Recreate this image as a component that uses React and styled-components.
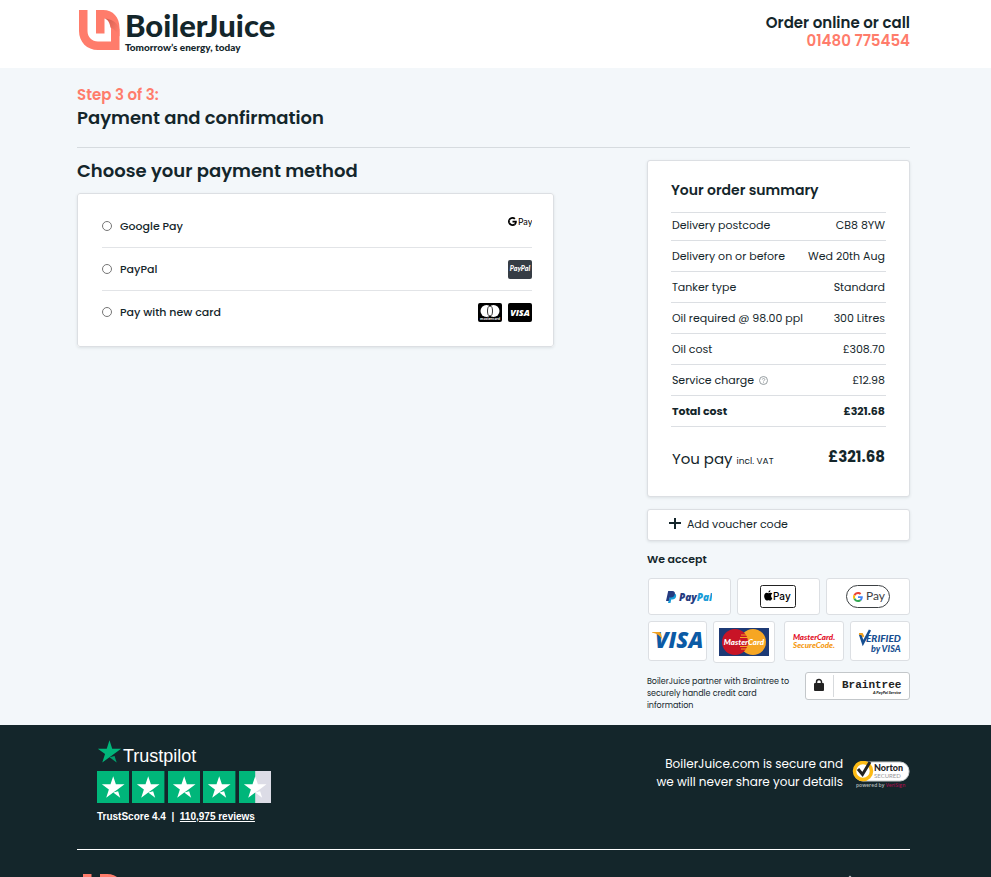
import React from "react";
import styled, { createGlobalStyle, css } from "styled-components";

const ink = "#14262b";
const coral = "#ff7c6b";
const line = "#dcdfe3";
const poppins = `Poppins, Inter, "Open Sans", sans-serif`;

const GlobalStyle = createGlobalStyle`
  *, *::before, *::after { box-sizing: border-box; }
  body { margin: 0; background: #f3f7fa; color: ${ink}; font-family: ${poppins}; font-size: 11px; }
  h1, h2, h3, p, fieldset { margin: 0; padding: 0; border: 0; }
  svg { display: block; flex: none; }
`;

const Page = styled.div`
  height: 100vh;
  overflow-y: auto;
  scrollbar-width: none;
  background: #f3f7fa;
`;

const Container = styled.div`
  padding: 0 81px 0 77px;
`;

const Header = styled.header`
  background: #fff;
  height: 68px;
`;

const HeaderRow = styled(Container)`
  display: flex;
  justify-content: space-between;
  align-items: flex-start;
`;

const LogoLink = styled.a`
  display: flex;
  gap: 5px;
  padding: 10px 0 0 2px;
  color: ${(p) => p.$color || ink};
  text-decoration: none;
  font-family: Lato, sans-serif;
`;

const LogoName = styled.span`
  display: block;
  font-size: 31px;
  line-height: 31px;
  font-weight: 900;
`;

const LogoTag = styled.span`
  display: block;
  font-size: 10px;
  line-height: 13px;
  font-weight: 900;
`;

const Call = styled.div`
  padding-top: 14px;
  text-align: right;
  font-size: 15px;
  line-height: 18px;
  font-weight: 600;
`;

const Phone = styled.a`
  display: block;
  color: ${coral};
  text-decoration: none;
`;

const TitleBar = styled.div`
  padding: 17px 0;
  border-bottom: 1px solid #d6dbdf;
`;

const Step = styled.p`
  color: ${coral};
  font-size: 15px;
  line-height: 20px;
  font-weight: 600;
`;

const Heading = styled.h1`
  margin-top: 1px;
  font-size: 18px;
  line-height: 24px;
  font-weight: 600;
`;

const Columns = styled.main`
  display: grid;
  grid-template-columns: 29fr 16fr;
  gap: 93px;
  padding: 12px 0 13px;
  align-items: start;
`;

const SectionTitle = styled.h2`
  font-size: 18px;
  line-height: 21px;
  font-weight: 600;
  margin-bottom: 12px;
`;

const Card = styled.section`
  background: #fff;
  border: 1px solid ${line};
  border-radius: 3px;
  box-shadow: 0 1px 3px rgba(20, 38, 43, 0.1);
`;

const Methods = styled(Card).attrs({ as: "fieldset" })`
  padding: 10px 21px 13px 24px;
`;

const MethodRow = styled.div`
  display: flex;
  align-items: center;
  gap: 6px;
  height: 43px;
  & + & { border-top: 1px solid #e2e4e7; }
`;

const MethodLabel = styled.label`
  display: flex;
  align-items: center;
  gap: 8px;
  margin-right: auto;
  font-size: 11px;
  line-height: 16px;
  font-weight: 500;
`;

const Radio = styled.input`
  appearance: none;
  width: 10px;
  height: 10px;
  margin: 0;
  border: 1px solid #767676;
  border-radius: 50%;
  background: #fff;
  &:checked { border: 3px solid #0b6bd3; }
`;

const Summary = styled(Card)`
  padding: 19px 23px 21px;
`;

const SummaryTitle = styled.h3`
  font-size: 14px;
  line-height: 20px;
  font-weight: 600;
  margin-bottom: 12px;
`;

const Lines = styled.table`
  width: 100%;
  border-collapse: collapse;
  border-bottom: 1px solid ${line};
`;

const Line = styled.tr`
  height: 31px;
  border-top: 1px solid ${line};
  font-size: 11px;
  line-height: 16px;
  font-weight: ${(p) => (p.$bold ? 700 : 400)};
  th, td { padding: 0 1px; font-weight: inherit; white-space: nowrap; }
  th { text-align: left; }
  td { text-align: right; }
  &:first-child { height: 28px; }
  &:first-child > * { padding-bottom: 3px; }
`;

const Help = styled.button`
  display: inline-flex;
  padding: 0;
  margin-left: 5px;
  border: 0;
  background: none;
  vertical-align: -1px;
`;

const PayRow = styled.div`
  display: flex;
  justify-content: space-between;
  align-items: flex-start;
  padding: 18px 1px 0;
`;

const YouPay = styled.span`
  font-size: 15px;
  line-height: 27px;
`;

const Vat = styled.small`
  font-size: 9px;
  font-weight: 400;
`;

const PayTotal = styled.strong`
  font-size: 15px;
  line-height: 23px;
`;

const Voucher = styled.button`
  display: flex;
  align-items: center;
  gap: 6px;
  width: 100%;
  height: 32px;
  margin: 12px 0 9px;
  padding: 0 21px 2px;
  border: 1px solid ${line};
  border-radius: 3px;
  background: #fff;
  box-shadow: 0 1px 3px rgba(20, 38, 43, 0.1);
  color: ${ink};
  font: 400 11px/16px ${poppins};
`;

const AcceptTitle = styled.h3`
  font-size: 11px;
  line-height: 18px;
  font-weight: 600;
  margin-bottom: 10px;
`;

const Badges = styled.div`
  display: grid;
  grid-template-columns: ${(p) => p.$cols};
  align-items: start;
  gap: 6px;
  margin-bottom: 6px;
  padding-left: 1px;
`;

const Badge = styled.div`
  display: flex;
  align-items: center;
  justify-content: center;
  height: ${(p) => p.$h}px;
  margin-left: ${(p) => (p.$spaced ? 3 : 0)}px;
  background: #fff;
  border: 1px solid ${line};
  border-radius: 3px;
`;

const Partner = styled.div`
  display: flex;
  justify-content: space-between;
  align-items: flex-start;
  padding-top: 3px;
`;

const PartnerText = styled.p`
  flex: 1;
  padding-top: 4px;
  font-size: 8px;
  line-height: 12px;
`;

const Braintree = styled.a`
  display: flex;
  width: 105px;
  height: 28px;
  border: 1px solid #c3c7ca;
  border-radius: 3px;
  background: #fff;
`;

const Footer = styled.footer`
  background: ${ink};
  color: #fff;
`;

const FooterTop = styled.div`
  display: flex;
  justify-content: space-between;
  align-items: flex-start;
  height: 125px;
  padding: 14px 0 0 20px;
  border-bottom: 1px solid #fff;
`;

const TrustBrand = styled.div`
  display: flex;
  align-items: flex-start;
  height: 29px;
  font: 400 18px/34px "Liberation Sans", Arial, sans-serif;
`;

const Stars = styled.div`
  display: grid;
  grid-template-columns: repeat(5, 1fr);
  gap: 3px;
  width: 174px;
  margin: 3px 0 6px;
  svg { width: 100%; height: 32px; }
`;

const Score = styled.p`
  font: 700 10px/16px "Liberation Sans", Arial, sans-serif;
  a { color: inherit; }
`;

const Secure = styled.div`
  display: flex;
  align-items: flex-end;
  gap: 9px;
  padding-top: 16px;
  text-align: right;
  font-size: 12px;
  line-height: 18px;
  font-weight: 400;
`;

const FooterBottom = styled.div`
  display: flex;
  justify-content: space-between;
  align-items: flex-start;
  padding: 14px 0 32px 4px;
`;

const TopLink = styled.a`
  display: flex;
  margin: 10px 53px 0 0;
`;

const brandText = css`
  font-family: ${(p) => p.$font || '"Open Sans"'}, sans-serif;
  font-weight: ${(p) => p.$weight || 700};
  font-style: ${(p) => (p.$italic ? "italic" : "normal")};
  font-size: ${(p) => p.$size}px;
`;
const Word = styled.text`${brandText}`;

const Mark = () => (
  <svg width="41" height="41" viewBox="0 0 41 41" aria-hidden="true">
    <defs>
      <linearGradient id="fold" x1="0" y1="0" x2="1" y2=".6">
        <stop offset="0" stopColor="#cf5a4c" />
        <stop offset="1" stopColor={coral} />
      </linearGradient>
    </defs>
    <path fill={coral} d="M17 0h7c10 0 16.500 7 16.500 18v22H19C8 40 0 32 0 21V0h8.500v21c0 6 4.500 10.500 10.500 10.500h13V19c0-7-3-10.500-6.500-10.500v15H17z" />
    <path fill="url(#fold)" d="M25.500 8.500c7 .5 13 4 15 11v7c-3-5-5-7-9-9-1-5.500-3-8-6-9z" />
  </svg>
);

const Logo = ({ color }) => (
  <LogoLink href="#" $color={color} aria-label="BoilerJuice home">
    <Mark />
    <span>
      <LogoName>BoilerJuice</LogoName>
      <LogoTag>Tomorrow’s energy, today</LogoTag>
    </span>
  </LogoLink>
);

const GoogleG = ({ x, y, size, mono }) => {
  const c = mono ? ["#000", "#000", "#000", "#000"] : ["#ea4335", "#fbbc05", "#34a853", "#4285f4"];
  return (
    <svg x={x} y={y} width={size} height={size} viewBox="0 0 48 48">
      <path fill={c[0]} d="M24 9.500c3.540 0 6.710 1.220 9.210 3.600l6.850-6.850C35.900 2.380 30.470 0 24 0 14.620 0 6.510 5.380 2.560 13.220l7.980 6.190C12.430 13.720 17.740 9.500 24 9.500z" />
      <path fill={c[3]} d="M46.980 24.550c0-1.570-.15-3.090-.38-4.550H24v9.020h12.940c-.58 2.960-2.260 5.480-4.780 7.180l7.730 6c4.510-4.180 7.090-10.360 7.090-17.650z" />
      <path fill={c[1]} d="M10.530 28.590c-.48-1.450-.76-2.990-.76-4.590s.27-3.140.76-4.590l-7.980-6.190C.92 16.460 0 20.120 0 24s.92 7.540 2.560 10.780l7.970-6.190z" />
      <path fill={c[2]} d="M24 48c6.480 0 11.930-2.130 15.890-5.810l-7.730-6c-2.150 1.450-4.920 2.300-8.160 2.300-6.260 0-11.570-4.220-13.470-9.910l-7.980 6.190C6.510 42.620 14.620 48 24 48z" />
    </svg>
  );
};

const GPayIcon = () => (
  <svg width="24" height="20" role="img" aria-label="Google Pay">
    <GoogleG x="0" y="1" size="9" mono />
    <Word x="10" y="9" $size="9" $font="Lato" $weight="400">Pay</Word>
  </svg>
);

const PayPalIcon = () => (
  <svg width="24" height="20" role="img" aria-label="PayPal">
    <rect y="1" width="24" height="19" rx="2" fill="#363d45" />
    <Word x="12" y="12" textAnchor="middle" fill="#fff" $size="7" $font="Lato" $italic $weight="900">PayPal</Word>
  </svg>
);

const MasterIcon = () => (
  <svg width="24" height="20" role="img" aria-label="Mastercard">
    <rect y="1" width="24" height="19" rx="2" />
    <circle cx="8.500" cy="9" r="6" fill="#fff" />
    <circle cx="15.500" cy="9" r="6" fill="#fff" />
    <ellipse cx="12" cy="9" rx="2.500" ry="5" fill="#fff" stroke="#000" strokeWidth=".8" />
    <Word x="12" y="18" textAnchor="middle" fill="#fff" $size="4" $font="Lato">mastercard</Word>
  </svg>
);

const VisaIcon = () => (
  <svg width="24" height="20" role="img" aria-label="Visa">
    <rect y="1" width="24" height="19" rx="2" />
    <Word x="12" y="14" textAnchor="middle" fill="#fff" $size="9" $italic $weight="800">VISA</Word>
  </svg>
);

const HelpIcon = () => (
  <svg width="9" height="9" viewBox="0 0 9 9" fill="none" stroke="#8a9295">
    <circle cx="4.500" cy="4.500" r="4" strokeWidth=".9" />
    <path d="M3.300 3.600c0-1.700 2.600-1.500 2.500 0 0 .8-1.300.8-1.300 1.900M4.500 6.300v.9" strokeWidth=".8" />
  </svg>
);

const StarShape = ({ color = "#fff", cut }) => (
  <>
    <path fill={color} d="M27.200 13.400h-8.560L16 5.300l-2.640 8.100H4.800l6.930 5-2.640 8.100L16 21.500l4.270-3.070z" />
    <path fill={cut || color} d="M16 21.500l4.870-1.230 2.030 6.230z" />
  </>
);

const TrustStar = ({ half }) => (
  <svg viewBox="0 0 32 32" preserveAspectRatio="xMidYMid slice">
    <path fill="#00b67a" d="M0 0h32v32H0z" />
    {half && <path fill="#dcdce6" d="M16 0h16v32H16z" />}
    <StarShape />
  </svg>
);

const PayPalBadge = () => (
  <svg width="46" height="14" role="img" aria-label="PayPal">
    <path fill="#179bd7" d="M4.500 3.500H8c2 0 2.500 1.500 2 3.300-.5 1.900-1.800 2.700-3.700 2.700H5.200L4.500 13H2z" />
    <path fill="#253b80" d="M2.200 1h4c2.300 0 3.100 1.300 2.600 3.300C8.300 6.500 7 7.500 5 7.500H3.600L2.800 11H0z" />
    <Word x="13" y="11" fill="#253b80" $size="10" $italic $weight="800">
      Pay<tspan fill="#179bd7">Pal</tspan>
    </Word>
  </svg>
);

const ApplePayBadge = () => (
  <svg width="36" height="24" role="img" aria-label="Apple Pay">
    <rect x=".5" y=".5" width="35" height="22" rx="2" fill="#fff" stroke="#222" />
    <path d="M12.300 13.300c-.8 2-1.900 2.700-3 2.100-.6-.3-1.100-.3-1.700 0-1.600.7-2.500-.6-3-2.100-.9-2.700-.2-5.400 2.100-5.600.8 0 1.400.5 1.900.5s1.200-.6 2.200-.5c.7.100 1.300.4 1.600.9-1.800 1.200-1.700 3.500-.1 4.700zM10.400 5.200c.1 1.300-.9 2.300-2 2.300-.1-1.200.9-2.200 2-2.300z" />
    <Word x="13" y="15" $size="10" $font="Inter" $weight="500">Pay</Word>
  </svg>
);

const GooglePayBadge = () => (
  <svg width="44" height="24" role="img" aria-label="Google Pay">
    <rect x=".5" y=".5" width="43" height="22" rx="11" fill="#fff" stroke="#3c4043" />
    <GoogleG x="7" y="7" size="10" />
    <Word x="20" y="15" fill="#3c4043" $size="12" $font="Lato" $weight="400">Pay</Word>
  </svg>
);

const VisaBadge = () => (
  <svg width="53" height="34" role="img" aria-label="Visa">
    <Word x="4" y="24" fill="#0b5aa5" $size="22" $italic $weight="800">VISA</Word>
    <path fill="#f2a11f" d="M1 8h6.500c1.500 0 2 .5 2.500 2l1.500 6C9.500 12 6 9.500 1 8.600z" />
  </svg>
);

const MasterBadge = () => (
  <svg width="50" height="28" role="img" aria-label="MasterCard">
    <path fill="#1d3a75" d="M0 0h50v28H0z" />
    <circle cx="34" cy="14" r="13" fill="#f6a623" />
    <circle cx="16" cy="14" r="13" fill="#c81426" />
    <path stroke="#f6a623" strokeWidth="1" d="M22 7h6M21 9.500h8M21 18.500h8M22 21h6" />
    <Word x="25" y="17" textAnchor="middle" fill="#fff" $size="8" $font="Lato" $weight="900" $italic>MasterCard</Word>
  </svg>
);

const SecureCodeBadge = () => (
  <svg width="50" height="24" role="img" aria-label="MasterCard SecureCode">
    <Word x="25" y="11" textAnchor="middle" fill="#e3122a" $size="8" $font="Lato" $weight="900" $italic>MasterCard.</Word>
    <Word x="25" y="19" textAnchor="middle" fill="#f59a12" $size="8" $font="Lato" $weight="900" $italic>SecureCode.</Word>
  </svg>
);

const VerifiedBadge = () => (
  <svg width="50" height="28" role="img" aria-label="Verified by Visa">
    <path fill="none" stroke="#174f91" strokeWidth="2.500" d="M5 7l3 9 7-13" />
    <path fill="none" stroke="#f2a11f" strokeWidth="2" d="M4 7h3l1.500 3" />
    <Word x="11" y="15" fill="#174f91" $size="10" $font="Lato" $weight="900" $italic>ERIFIED</Word>
    <Word x="16" y="25" fill="#174f91" $size="9" $font="Lato" $weight="900" $italic>by VISA</Word>
  </svg>
);

const BraintreeArt = () => (
  <svg width="103" height="26" role="img" aria-label="Braintree, a PayPal service">
    <rect x="8" y="10" width="10" height="8" rx="1" fill="#222" />
    <path fill="none" stroke="#222" strokeWidth="1.500" d="M10.500 10V9a2.500 2.500 0 0 1 5 0v1" />
    <path stroke="#d7dadd" d="M27.500 2v22" />
    <Word x="36" y="15" fill="#222" $size="11" $font='"Liberation Mono"' $weight="700">Braintree</Word>
    <Word x="95" y="21" textAnchor="end" fill="#222" $size="4" $font="Lato" $italic $weight="900">A PayPal Service</Word>
  </svg>
);

const NortonSeal = () => (
  <svg width="58" height="30" role="img" aria-label="Norton Secured, powered by VeriSign">
    <rect x="2" y="1" width="55" height="19" rx="9" fill="#fff" stroke="#c9cccd" />
    <circle cx="11" cy="10" r="8.500" fill="#fff" stroke="#fdbb14" strokeWidth="3.500" />
    <path fill="none" stroke="#222" strokeWidth="3" d="M6 8l4.500 5.500L18 1" />
    <Word x="22" y="10" fill="#222" $size="9" $font="Lato" $weight="900">Norton</Word>
    <Word x="22" y="17" fill="#999" $size="6" $font="Lato" $weight="400">SECURED</Word>
    <Word x="4" y="26" fill="#b6bcbe" $size="5" $weight="600">
      powered by <tspan fill="#a0104b">VeriSign</tspan>
    </Word>
  </svg>
);

const methods = [
  { id: "gpay", label: "Google Pay", icons: <GPayIcon /> },
  { id: "paypal", label: "PayPal", icons: <PayPalIcon /> },
  { id: "card", label: "Pay with new card", icons: <><MasterIcon /><VisaIcon /></> },
];

const lines = [
  ["Delivery postcode", "CB8 8YW"],
  ["Delivery on or before", "Wed 20th Aug"],
  ["Tanker type", "Standard"],
  ["Oil required @ 98.00 ppl", "300 Litres"],
  ["Oil cost", "£308.70"],
  ["Service charge", "£12.98", "help"],
  ["Total cost", "£321.68", "bold"],
];

export default function App() {
  return (
    <Page>
      <GlobalStyle />
      <Header>
        <HeaderRow>
          <Logo />
          <Call>
            Order online or call
            <Phone href="tel:01480775454">01480 775454</Phone>
          </Call>
        </HeaderRow>
      </Header>

      <Container>
        <TitleBar>
          <Step>Step 3 of 3:</Step>
          <Heading>Payment and confirmation</Heading>
        </TitleBar>
        <Columns>
          <div>
            <SectionTitle id="method-title">Choose your payment method</SectionTitle>
            <Methods aria-labelledby="method-title">
              {methods.map((m) => (
                <MethodRow key={m.id}>
                  <MethodLabel htmlFor={m.id}>
                    <Radio type="radio" name="method" id={m.id} />
                    {m.label}
                  </MethodLabel>
                  {m.icons}
                </MethodRow>
              ))}
            </Methods>
          </div>

          <aside>
            <Summary>
              <SummaryTitle>Your order summary</SummaryTitle>
              <Lines>
                <tbody>
                  {lines.map(([label, value, kind]) => (
                    <Line key={label} $bold={kind === "bold"}>
                      <th scope="row">
                        {label}
                        {kind === "help" && (
                          <Help type="button" aria-label="About the service charge"><HelpIcon /></Help>
                        )}
                      </th>
                      <td>{value}</td>
                    </Line>
                  ))}
                </tbody>
              </Lines>
              <PayRow>
                <YouPay>You pay <Vat>incl. VAT</Vat></YouPay>
                <PayTotal>£321.68</PayTotal>
              </PayRow>
            </Summary>

            <Voucher type="button">
              <svg width="12" height="12" stroke={ink} strokeWidth="2"><path d="M6 0v11M0 5h12" /></svg>
              Add voucher code
            </Voucher>

            <AcceptTitle>We accept</AcceptTitle>
            <Badges $cols="83fr 83fr 84fr">
              <Badge $h={37}><PayPalBadge /></Badge>
              <Badge $h={37}><ApplePayBadge /></Badge>
              <Badge $h={37}><GooglePayBadge /></Badge>
            </Badges>
            <Badges $cols="59fr 62fr 63fr 60fr">
              <Badge $h={40}><VisaBadge /></Badge>
              <Badge $h={42}><MasterBadge /></Badge>
              <Badge $h={40} $spaced><SecureCodeBadge /></Badge>
              <Badge $h={40}><VerifiedBadge /></Badge>
            </Badges>
            <Partner>
              <PartnerText>
                BoilerJuice partner with Braintree to securely handle credit card information
              </PartnerText>
              <Braintree href="#"><BraintreeArt /></Braintree>
            </Partner>
          </aside>
        </Columns>
      </Container>

      <Footer>
        <Container>
          <FooterTop>
            <div>
              <TrustBrand>
                <svg width="26" height="26" viewBox="4 4 25 25"><StarShape color="#00b67a" cut="#00a06c" /></svg>
                Trustpilot
              </TrustBrand>
              <Stars role="img" aria-label="4.4 out of 5 stars">
                <TrustStar /><TrustStar /><TrustStar /><TrustStar /><TrustStar half />
              </Stars>
              <Score>TrustScore 4.4 &nbsp;|&nbsp; <a href="#">110,975 reviews</a></Score>
            </div>
            <Secure>
              <p>BoilerJuice.com is secure and<br />we will never share your details</p>
              <NortonSeal />
            </Secure>
          </FooterTop>
          <FooterBottom>
            <Logo color="#c5cacc" />
            <TopLink href="#" aria-label="Back to top">
              <svg width="14" height="14" fill="none" stroke="#c5cacc" strokeWidth="2"><path d="M2 8l5-5 5 5" /></svg>
            </TopLink>
          </FooterBottom>
        </Container>
      </Footer>
    </Page>
  );
}
